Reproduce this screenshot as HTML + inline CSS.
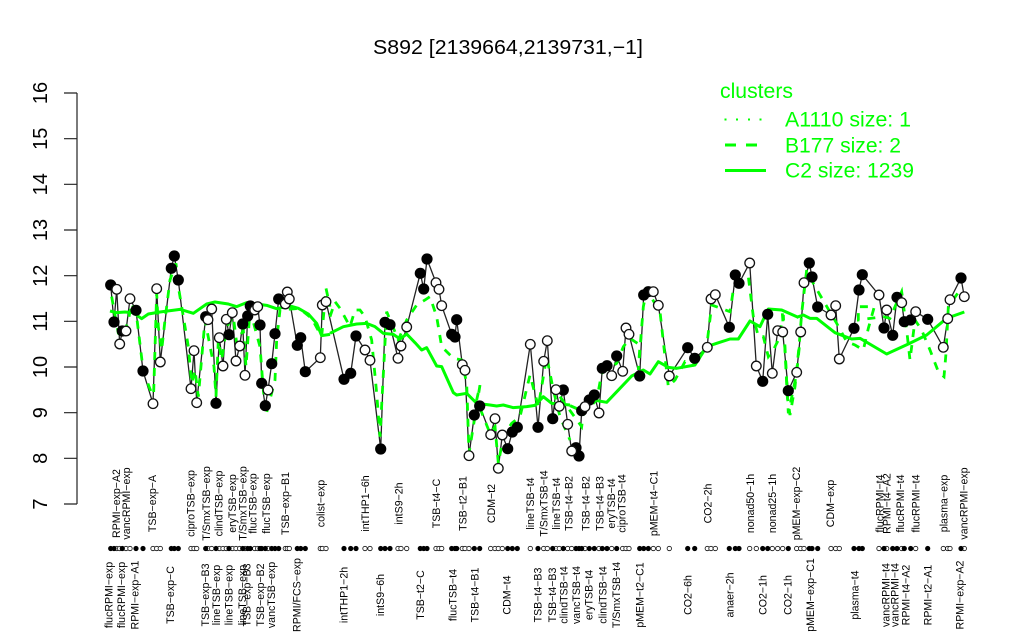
<!DOCTYPE html>
<html><head><meta charset="utf-8"><title>S892</title>
<style>
html,body{margin:0;padding:0;background:#fff}
svg{display:block;font-family:"Liberation Sans",sans-serif;filter:blur(.3px)}
.s{fill:none;stroke:#0f0;stroke-width:3;stroke-linejoin:round;vector-effect:non-scaling-stroke}
.d{fill:none;stroke:#0f0;stroke-width:2.8;stroke-dasharray:8 8;vector-effect:non-scaling-stroke}
.l text{font-size:10.6px;text-anchor:middle}
.lg text{fill:#0f0}
</style></head><body>
<svg width="1024" height="640" viewBox="0 0 1024 640" xmlns="http://www.w3.org/2000/svg">
<rect width="1024" height="640" fill="#fff"/>
<text x="508" y="54" font-size="20" text-anchor="middle" textLength="270" lengthAdjust="spacingAndGlyphs">S892 [2139664,2139731,−1]</text>

<g stroke="#222" stroke-width="1.2" fill="none">
<path d="M77 93V504M64 93H77M64 138.7H77M64 184.3H77M64 230H77M64 275.7H77M64 321.3H77M64 367H77M64 412.7H77M64 458.3H77M64 504H77"/>
</g>
<g font-size="20" text-anchor="middle">
<text transform="translate(47 93) rotate(-90)">16</text>
<text transform="translate(47 138.7) rotate(-90)">15</text>
<text transform="translate(47 184.3) rotate(-90)">14</text>
<text transform="translate(47 230) rotate(-90)">13</text>
<text transform="translate(47 275.7) rotate(-90)">12</text>
<text transform="translate(47 321.3) rotate(-90)">11</text>
<text transform="translate(47 367) rotate(-90)">10</text>
<text transform="translate(47 412.7) rotate(-90)">9</text>
<text transform="translate(47 458.3) rotate(-90)">8</text>
<text transform="translate(47 504) rotate(-90)">7</text>
</g>

<!-- black connecting line -->
<polyline fill="none" stroke="#222" stroke-width="1.3" points="110.7,285 114,322 116.7,289.3 119.7,344 122.3,331 126,331 130,298.7 136,310.3 143,371 153,403.7 156.7,288.7 160.3,362 171.3,268.3 174.3,256 178.3,280 191,388.7 194,350.7 196.7,402.7 205.7,316.7 208,319.7 211.7,309 216,403.3 219.3,337.7 223,366 226.3,319.3 229,334.7 232.3,312.7 236,361 239.7,346 242.7,324 245,375.3 247.7,316 250.3,306 254.7,310 257.7,306.7 260,325 261.7,383.3 265.3,405.7 268,390 271.7,363.7 275,333.7 278.7,299 285.3,304 287.3,292 289.3,299 297.3,345.3 300.7,337.7 305.3,371.7 320.3,357.7 322.3,305 326,301.7 344,379.3 350.7,373.3 356,336 365,350 370,360.3 380.7,449 385,322.3 390,324.7 398,358.3 401,346 406.7,327 420.3,273.3 423.7,289 427,259 436,282.7 439,289.3 441.7,305.7 451.7,334.3 455,337 456.7,319.7 462.3,364.7 465,370.3 469,455.7 474.3,415 479.7,406 490.7,434.7 495,418.7 498.3,468.3 502.3,435 507.7,448.7 512.3,432 517.3,427.3 530.3,344.3 538,427.3 543.7,361.3 547.3,340.7 552.7,418.7 556,389.7 559.3,406.3 563.3,390 567.7,424.3 571.7,451 576,447.7 579,456 581.7,410.7 585,406.7 589.3,400 594.3,395 599,413 602.3,368.3 607,365.7 611.7,375.7 616.7,356 622.7,371.3 626,328 629,334.3 639.7,376 643.7,295 648.3,291.7 653.3,291.7 658.3,305.3 669.3,376 687.7,347.7 694.7,358.3 707.3,347.3 711,299 715.3,294.7 729.3,327.3 735.3,275 739,283.3 749.7,263 756.3,366 762.7,381.3 767.7,314.3 772.3,373.3 777.7,330.7 782.7,332 788.3,390.7 796.7,372.3 800.7,332 804,282.7 809.3,263 812,277 817.7,307 831,315 835.7,305.7 839.3,359 854,328.3 859,290 862.3,274.7 879,295 884,328 886.7,310 892.7,335.3 897,297.3 901.7,302.7 904.3,321.7 910.7,320 915.7,311.7 927.7,319.3 943.3,347.3 947.7,318.7 950,299.7 961,278 964.3,296.7"/>

<!-- dashed cluster -->
<g transform="translate(90 240) scale(.33333)"><polyline class="d" points="65,170 72,210 85,280 100,290 115,240 125,190 140,230 160,395 185,460 190,490 200,160 205,260 215,330 225,240 240,120 258,70 265,140 295,320 305,430 315,390 325,470 345,240 372,380 378,470 385,300 395,360 410,260 430,230 440,310 460,270 468,380 480,210 510,320 520,450 528,525 555,420 560,300 570,210 628,205 665,235 695,290 708,145 720,200"/></g>
<g transform="translate(330 240) scale(.33333)"><polyline class="d" points="0,230 15,185 30,205 60,260 75,210 90,210 105,230 125,300 140,460 150,590 170,215 205,300 230,240 260,195 285,180 300,170 320,230 335,320 370,355 395,360 410,430 417,640 450,435 440,480 480,580 495,560 505,670 520,590 545,550 570,530 600,405 625,500 640,410 650,350 670,450 690,530 720,600"/></g>
<g transform="translate(560 240) scale(.33333)"><polyline class="d" points="0,470 65,560 70,520 110,480 125,400 170,370 190,320 210,295 240,315 235,390 250,200 260,150 300,215 325,440 345,420 375,365 400,375 440,320 455,195 510,215 520,150 565,110 580,230 595,290 610,290 625,350 640,330 655,300 670,225 685,520 710,400 718,320"/></g>
<g transform="translate(780 240) scale(.33333)"><polyline class="d" points="7,220 15,330 22,470 30,525 45,440 58,310 65,220 80,90 100,130 120,165 170,250 200,305 225,315 250,330 265,265 283,200 235,200 235,240 310,230 330,235 345,200 365,155 380,270 390,360 405,240 425,270 450,330 475,395 492,410 498,340 505,200 540,150"/></g>

<!-- solid cluster -->
<g transform="translate(90 240) scale(.33333)"><polyline class="s" points="60,213 80,218 105,216 130,218 155,236 175,222 210,216 270,208 310,220 350,192 375,186 415,192 440,200 470,188 500,192 530,196 560,206 600,198 625,205 655,222 680,250 695,287 720,283"/></g>
<g transform="translate(330 240) scale(.33333)"><polyline class="s" points="0,280 40,260 80,252 110,250 135,260 160,280 190,283 210,297 230,282 255,308 275,330 290,323 320,378 335,380 370,458 380,465 410,460 440,490 480,495 500,498 520,495 550,503 590,500 615,496 640,470 665,490 720,495"/></g>
<g transform="translate(560 240) scale(.33333)"><polyline class="s" points="30,497 60,510 100,480 140,487 180,445 215,408 250,390 270,402 295,365 325,382 350,385 405,375 440,320 470,310 510,297 535,297 570,243 600,260 625,207 665,210 715,232"/></g>
<g transform="translate(780 240) scale(.33333)"><polyline class="s" points="50,232 70,225 90,235 110,235 165,278 215,297 240,295 320,342 350,328 385,312 440,285 500,235 553,216"/></g>

<!-- points -->
<g fill="#000">
<circle r="5.6" cx="110.7" cy="285"/><circle r="5.6" cx="114" cy="322"/><circle r="5.6" cx="122.3" cy="331"/><circle r="5.6" cx="136" cy="310.3"/><circle r="5.6" cx="143" cy="371"/><circle r="5.6" cx="171.3" cy="268.3"/><circle r="5.6" cx="174.3" cy="256"/><circle r="5.6" cx="178.3" cy="280"/><circle r="5.6" cx="205.7" cy="316.7"/><circle r="5.6" cx="216" cy="403.3"/><circle r="5.6" cx="229" cy="334.7"/><circle r="5.6" cx="242.7" cy="324"/><circle r="5.6" cx="247.7" cy="316"/><circle r="5.6" cx="250.3" cy="306"/><circle r="5.6" cx="260" cy="325"/><circle r="5.6" cx="261.7" cy="383.3"/><circle r="5.6" cx="265.3" cy="405.7"/><circle r="5.6" cx="271.7" cy="363.7"/><circle r="5.6" cx="275" cy="333.7"/><circle r="5.6" cx="278.7" cy="299"/><circle r="5.6" cx="297.3" cy="345.3"/><circle r="5.6" cx="300.7" cy="337.7"/><circle r="5.6" cx="305.3" cy="371.7"/><circle r="5.6" cx="344" cy="379.3"/><circle r="5.6" cx="350.7" cy="373.3"/><circle r="5.6" cx="356" cy="336"/><circle r="5.6" cx="380.7" cy="449"/><circle r="5.6" cx="385" cy="322.3"/><circle r="5.6" cx="390" cy="324.7"/><circle r="5.6" cx="420.3" cy="273.3"/><circle r="5.6" cx="423.7" cy="289"/><circle r="5.6" cx="427" cy="259"/><circle r="5.6" cx="451.7" cy="334.3"/><circle r="5.6" cx="455" cy="337"/><circle r="5.6" cx="456.7" cy="319.7"/><circle r="5.6" cx="474.3" cy="415"/><circle r="5.6" cx="479.7" cy="406"/><circle r="5.6" cx="507.7" cy="448.7"/><circle r="5.6" cx="512.3" cy="432"/><circle r="5.6" cx="517.3" cy="427.3"/><circle r="5.6" cx="538" cy="427.3"/><circle r="5.6" cx="552.7" cy="418.7"/><circle r="5.6" cx="563.3" cy="390"/><circle r="5.6" cx="576" cy="447.7"/><circle r="5.6" cx="579" cy="456"/><circle r="5.6" cx="581.7" cy="410.7"/><circle r="5.6" cx="589.3" cy="400"/><circle r="5.6" cx="594.3" cy="395"/><circle r="5.6" cx="602.3" cy="368.3"/><circle r="5.6" cx="607" cy="365.7"/><circle r="5.6" cx="616.7" cy="356"/><circle r="5.6" cx="639.7" cy="376"/><circle r="5.6" cx="643.7" cy="295"/><circle r="5.6" cx="648.3" cy="291.7"/><circle r="5.6" cx="687.7" cy="347.7"/><circle r="5.6" cx="694.7" cy="358.3"/><circle r="5.6" cx="729.3" cy="327.3"/><circle r="5.6" cx="735.3" cy="275"/><circle r="5.6" cx="739" cy="283.3"/><circle r="5.6" cx="762.7" cy="381.3"/><circle r="5.6" cx="767.7" cy="314.3"/><circle r="5.6" cx="788.3" cy="390.7"/><circle r="5.6" cx="809.3" cy="263"/><circle r="5.6" cx="812" cy="277"/><circle r="5.6" cx="817.7" cy="307"/><circle r="5.6" cx="854" cy="328.3"/><circle r="5.6" cx="859" cy="290"/><circle r="5.6" cx="862.3" cy="274.7"/><circle r="5.6" cx="884" cy="328"/><circle r="5.6" cx="892.7" cy="335.3"/><circle r="5.6" cx="897" cy="297.3"/><circle r="5.6" cx="904.3" cy="321.7"/><circle r="5.6" cx="910.7" cy="320"/><circle r="5.6" cx="927.7" cy="319.3"/><circle r="5.6" cx="961" cy="278"/>
</g>
<g fill="#fff" stroke="#111" stroke-width="1.3">
<circle r="4.8" cx="116.7" cy="289.3"/><circle r="4.8" cx="119.7" cy="344"/><circle r="4.8" cx="126" cy="331"/><circle r="4.8" cx="130" cy="298.7"/><circle r="4.8" cx="153" cy="403.7"/><circle r="4.8" cx="156.7" cy="288.7"/><circle r="4.8" cx="160.3" cy="362"/><circle r="4.8" cx="191" cy="388.7"/><circle r="4.8" cx="194" cy="350.7"/><circle r="4.8" cx="196.7" cy="402.7"/><circle r="4.8" cx="208" cy="319.7"/><circle r="4.8" cx="211.7" cy="309"/><circle r="4.8" cx="219.3" cy="337.7"/><circle r="4.8" cx="223" cy="366"/><circle r="4.8" cx="226.3" cy="319.3"/><circle r="4.8" cx="232.3" cy="312.7"/><circle r="4.8" cx="236" cy="361"/><circle r="4.8" cx="239.7" cy="346"/><circle r="4.8" cx="245" cy="375.3"/><circle r="4.8" cx="254.7" cy="310"/><circle r="4.8" cx="257.7" cy="306.7"/><circle r="4.8" cx="268" cy="390"/><circle r="4.8" cx="285.3" cy="304"/><circle r="4.8" cx="287.3" cy="292"/><circle r="4.8" cx="289.3" cy="299"/><circle r="4.8" cx="320.3" cy="357.7"/><circle r="4.8" cx="322.3" cy="305"/><circle r="4.8" cx="326" cy="301.7"/><circle r="4.8" cx="365" cy="350"/><circle r="4.8" cx="370" cy="360.3"/><circle r="4.8" cx="398" cy="358.3"/><circle r="4.8" cx="401" cy="346"/><circle r="4.8" cx="406.7" cy="327"/><circle r="4.8" cx="436" cy="282.7"/><circle r="4.8" cx="439" cy="289.3"/><circle r="4.8" cx="441.7" cy="305.7"/><circle r="4.8" cx="462.3" cy="364.7"/><circle r="4.8" cx="465" cy="370.3"/><circle r="4.8" cx="469" cy="455.7"/><circle r="4.8" cx="490.7" cy="434.7"/><circle r="4.8" cx="495" cy="418.7"/><circle r="4.8" cx="498.3" cy="468.3"/><circle r="4.8" cx="502.3" cy="435"/><circle r="4.8" cx="530.3" cy="344.3"/><circle r="4.8" cx="543.7" cy="361.3"/><circle r="4.8" cx="547.3" cy="340.7"/><circle r="4.8" cx="556" cy="389.7"/><circle r="4.8" cx="559.3" cy="406.3"/><circle r="4.8" cx="567.7" cy="424.3"/><circle r="4.8" cx="571.7" cy="451"/><circle r="4.8" cx="585" cy="406.7"/><circle r="4.8" cx="599" cy="413"/><circle r="4.8" cx="611.7" cy="375.7"/><circle r="4.8" cx="622.7" cy="371.3"/><circle r="4.8" cx="626" cy="328"/><circle r="4.8" cx="629" cy="334.3"/><circle r="4.8" cx="653.3" cy="291.7"/><circle r="4.8" cx="658.3" cy="305.3"/><circle r="4.8" cx="669.3" cy="376"/><circle r="4.8" cx="707.3" cy="347.3"/><circle r="4.8" cx="711" cy="299"/><circle r="4.8" cx="715.3" cy="294.7"/><circle r="4.8" cx="749.7" cy="263"/><circle r="4.8" cx="756.3" cy="366"/><circle r="4.8" cx="772.3" cy="373.3"/><circle r="4.8" cx="777.7" cy="330.7"/><circle r="4.8" cx="782.7" cy="332"/><circle r="4.8" cx="796.7" cy="372.3"/><circle r="4.8" cx="800.7" cy="332"/><circle r="4.8" cx="804" cy="282.7"/><circle r="4.8" cx="831" cy="315"/><circle r="4.8" cx="835.7" cy="305.7"/><circle r="4.8" cx="839.3" cy="359"/><circle r="4.8" cx="879" cy="295"/><circle r="4.8" cx="886.7" cy="310"/><circle r="4.8" cx="901.7" cy="302.7"/><circle r="4.8" cx="915.7" cy="311.7"/><circle r="4.8" cx="943.3" cy="347.3"/><circle r="4.8" cx="947.7" cy="318.7"/><circle r="4.8" cx="950" cy="299.7"/><circle r="4.8" cx="964.3" cy="296.7"/>
</g>

<!-- rug: open -->
<g fill="#fff" stroke="#111" stroke-width=".8" transform="translate(0 548.5)">
<circle r="2.2" cx="116.7"/><circle r="2.2" cx="119.7"/><circle r="2.2" cx="126"/><circle r="2.2" cx="130"/><circle r="2.2" cx="153"/><circle r="2.2" cx="156.7"/><circle r="2.2" cx="160.3"/><circle r="2.2" cx="191"/><circle r="2.2" cx="194"/><circle r="2.2" cx="196.7"/><circle r="2.2" cx="208"/><circle r="2.2" cx="211.7"/><circle r="2.2" cx="219.3"/><circle r="2.2" cx="223"/><circle r="2.2" cx="226.3"/><circle r="2.2" cx="232.3"/><circle r="2.2" cx="236"/><circle r="2.2" cx="239.7"/><circle r="2.2" cx="245"/><circle r="2.2" cx="254.7"/><circle r="2.2" cx="257.7"/><circle r="2.2" cx="268"/><circle r="2.2" cx="285.3"/><circle r="2.2" cx="287.3"/><circle r="2.2" cx="289.3"/><circle r="2.2" cx="320.3"/><circle r="2.2" cx="322.3"/><circle r="2.2" cx="326"/><circle r="2.2" cx="365"/><circle r="2.2" cx="370"/><circle r="2.2" cx="398"/><circle r="2.2" cx="401"/><circle r="2.2" cx="406.7"/><circle r="2.2" cx="436"/><circle r="2.2" cx="439"/><circle r="2.2" cx="441.7"/><circle r="2.2" cx="462.3"/><circle r="2.2" cx="465"/><circle r="2.2" cx="469"/><circle r="2.2" cx="490.7"/><circle r="2.2" cx="495"/><circle r="2.2" cx="498.3"/><circle r="2.2" cx="502.3"/><circle r="2.2" cx="530.3"/><circle r="2.2" cx="543.7"/><circle r="2.2" cx="547.3"/><circle r="2.2" cx="556"/><circle r="2.2" cx="559.3"/><circle r="2.2" cx="567.7"/><circle r="2.2" cx="571.7"/><circle r="2.2" cx="585"/><circle r="2.2" cx="599"/><circle r="2.2" cx="611.7"/><circle r="2.2" cx="622.7"/><circle r="2.2" cx="626"/><circle r="2.2" cx="629"/><circle r="2.2" cx="653.3"/><circle r="2.2" cx="658.3"/><circle r="2.2" cx="669.3"/><circle r="2.2" cx="707.3"/><circle r="2.2" cx="711"/><circle r="2.2" cx="715.3"/><circle r="2.2" cx="749.7"/><circle r="2.2" cx="756.3"/><circle r="2.2" cx="772.3"/><circle r="2.2" cx="777.7"/><circle r="2.2" cx="782.7"/><circle r="2.2" cx="796.7"/><circle r="2.2" cx="800.7"/><circle r="2.2" cx="804"/><circle r="2.2" cx="831"/><circle r="2.2" cx="835.7"/><circle r="2.2" cx="839.3"/><circle r="2.2" cx="879"/><circle r="2.2" cx="886.7"/><circle r="2.2" cx="901.7"/><circle r="2.2" cx="915.7"/><circle r="2.2" cx="943.3"/><circle r="2.2" cx="947.7"/><circle r="2.2" cx="950"/><circle r="2.2" cx="964.3"/>
</g>
<!-- rug: filled -->
<g fill="#000" transform="translate(0 548.5)">
<circle r="2.6" cx="110.7"/><circle r="2.6" cx="114"/><circle r="2.6" cx="122.3"/><circle r="2.6" cx="136"/><circle r="2.6" cx="143"/><circle r="2.6" cx="171.3"/><circle r="2.6" cx="174.3"/><circle r="2.6" cx="178.3"/><circle r="2.6" cx="205.7"/><circle r="2.6" cx="216"/><circle r="2.6" cx="229"/><circle r="2.6" cx="242.7"/><circle r="2.6" cx="247.7"/><circle r="2.6" cx="250.3"/><circle r="2.6" cx="260"/><circle r="2.6" cx="261.7"/><circle r="2.6" cx="265.3"/><circle r="2.6" cx="271.7"/><circle r="2.6" cx="275"/><circle r="2.6" cx="278.7"/><circle r="2.6" cx="297.3"/><circle r="2.6" cx="300.7"/><circle r="2.6" cx="305.3"/><circle r="2.6" cx="344"/><circle r="2.6" cx="350.7"/><circle r="2.6" cx="356"/><circle r="2.6" cx="380.7"/><circle r="2.6" cx="385"/><circle r="2.6" cx="390"/><circle r="2.6" cx="420.3"/><circle r="2.6" cx="423.7"/><circle r="2.6" cx="427"/><circle r="2.6" cx="451.7"/><circle r="2.6" cx="455"/><circle r="2.6" cx="456.7"/><circle r="2.6" cx="474.3"/><circle r="2.6" cx="479.7"/><circle r="2.6" cx="507.7"/><circle r="2.6" cx="512.3"/><circle r="2.6" cx="517.3"/><circle r="2.6" cx="538"/><circle r="2.6" cx="552.7"/><circle r="2.6" cx="563.3"/><circle r="2.6" cx="576"/><circle r="2.6" cx="579"/><circle r="2.6" cx="581.7"/><circle r="2.6" cx="589.3"/><circle r="2.6" cx="594.3"/><circle r="2.6" cx="602.3"/><circle r="2.6" cx="607"/><circle r="2.6" cx="616.7"/><circle r="2.6" cx="639.7"/><circle r="2.6" cx="643.7"/><circle r="2.6" cx="648.3"/><circle r="2.6" cx="687.7"/><circle r="2.6" cx="694.7"/><circle r="2.6" cx="729.3"/><circle r="2.6" cx="735.3"/><circle r="2.6" cx="739"/><circle r="2.6" cx="762.7"/><circle r="2.6" cx="767.7"/><circle r="2.6" cx="788.3"/><circle r="2.6" cx="809.3"/><circle r="2.6" cx="812"/><circle r="2.6" cx="817.7"/><circle r="2.6" cx="854"/><circle r="2.6" cx="859"/><circle r="2.6" cx="862.3"/><circle r="2.6" cx="884"/><circle r="2.6" cx="892.7"/><circle r="2.6" cx="897"/><circle r="2.6" cx="904.3"/><circle r="2.6" cx="910.7"/><circle r="2.6" cx="927.7"/><circle r="2.6" cx="961"/>
</g>

<!-- upper labels -->
<g class="l">
<text transform="translate(120 503.5) rotate(-90)">RPMI−exp−A2</text>
<text transform="translate(130 503.5) rotate(-90)">vancRPMI−exp</text>
<text transform="translate(156 503.5) rotate(-90)">TSB−exp−A</text>
<text transform="translate(194.3 503.5) rotate(-90)">ciproTSB−exp</text>
<text transform="translate(210 503.5) rotate(-90)">T/SmxTSB−exp</text>
<text transform="translate(222.7 503.5) rotate(-90)">clindTSB−exp</text>
<text transform="translate(236 503.5) rotate(-90)">eryTSB−exp</text>
<text transform="translate(246.7 503.5) rotate(-90)">T/SmxTSB−exp</text>
<text transform="translate(256.7 503.5) rotate(-90)">flucTSB−exp</text>
<text transform="translate(270 503.5) rotate(-90)">flucTSB−exp</text>
<text transform="translate(289 503.5) rotate(-90)">TSB−exp−B1</text>
<text transform="translate(324.3 503.5) rotate(-90)">colist−exp</text>
<text transform="translate(369 503.5) rotate(-90)">intTHP1−6h</text>
<text transform="translate(402.3 503.5) rotate(-90)">intS9−2h</text>
<text transform="translate(440 503.5) rotate(-90)">TSB−t4−C</text>
<text transform="translate(466.7 503.5) rotate(-90)">TSB−t2−B1</text>
<text transform="translate(495 503.5) rotate(-90)">CDM−t2</text>
<text transform="translate(534 503.5) rotate(-90)">lineTSB−t4</text>
<text transform="translate(547.7 503.5) rotate(-90)">T/SmxTSB−t4</text>
<text transform="translate(560 503.5) rotate(-90)">lineTSB−t4</text>
<text transform="translate(572.7 503.5) rotate(-90)">TSB−t4−B2</text>
<text transform="translate(589.3 503.5) rotate(-90)">TSB−t4−B2</text>
<text transform="translate(603.3 503.5) rotate(-90)">TSB−t4−B3</text>
<text transform="translate(615 503.5) rotate(-90)">eryTSB−t4</text>
<text transform="translate(625.7 503.5) rotate(-90)">ciproTSB−t4</text>
<text transform="translate(657.3 503.5) rotate(-90)">pMEM−t4−C1</text>
<text transform="translate(711.7 503.5) rotate(-90)">CO2−2h</text>
<text transform="translate(754 503.5) rotate(-90)">nonad50−1h</text>
<text transform="translate(776 503.5) rotate(-90)">nonad25−1h</text>
<text transform="translate(800 503.5) rotate(-90)">pMEM−exp−C2</text>
<text transform="translate(834 503.5) rotate(-90)">CDM−exp</text>
<text transform="translate(883.3 503.5) rotate(-90)">flucRPMI−t4</text>
<text transform="translate(890.7 503.5) rotate(-90)">RPMI−t4−A2</text>
<text transform="translate(904 503.5) rotate(-90)">flucRPMI−t4</text>
<text transform="translate(919.3 503.5) rotate(-90)">flucRPMI−t4</text>
<text transform="translate(947.7 503.5) rotate(-90)">plasma−exp</text>
<text transform="translate(967.3 503.5) rotate(-90)">vancRPMI−exp</text>
</g>
<!-- lower labels -->
<g class="l">
<text transform="translate(112.7 595) rotate(-90)">flucRPMI−exp</text>
<text transform="translate(125 595) rotate(-90)">flucRPMI−exp</text>
<text transform="translate(138.3 595) rotate(-90)">RPMI−exp−A1</text>
<text transform="translate(174 595) rotate(-90)">TSB−exp−C</text>
<text transform="translate(209 595) rotate(-90)">TSB−exp−B3</text>
<text transform="translate(220 595) rotate(-90)">lineTSB−exp</text>
<text transform="translate(232.7 595) rotate(-90)">lineTSB−exp</text>
<text transform="translate(246 595) rotate(-90)">lineTSB−exp</text>
<text transform="translate(250.7 595) rotate(-90)">TSB−exp−B3</text>
<text transform="translate(264 595) rotate(-90)">TSB−exp−B2</text>
<text transform="translate(275 595) rotate(-90)">vancTSB−exp</text>
<text transform="translate(300.7 595) rotate(-90)">RPMI/FCS−exp</text>
<text transform="translate(347.3 595) rotate(-90)">intTHP1−2h</text>
<text transform="translate(384 595) rotate(-90)">intS9−6h</text>
<text transform="translate(424 595) rotate(-90)">TSB−t2−C</text>
<text transform="translate(456.7 595) rotate(-90)">flucTSB−t4</text>
<text transform="translate(478.3 595) rotate(-90)">TSB−t4−B1</text>
<text transform="translate(510.7 595) rotate(-90)">CDM−t4</text>
<text transform="translate(541.7 595) rotate(-90)">TSB−t4−B3</text>
<text transform="translate(556 595) rotate(-90)">TSB−t4−B3</text>
<text transform="translate(567.3 595) rotate(-90)">clindTSB−t4</text>
<text transform="translate(580 595) rotate(-90)">vancTSB−t4</text>
<text transform="translate(592.7 595) rotate(-90)">eryTSB−t4</text>
<text transform="translate(606.7 595) rotate(-90)">clindTSB−t4</text>
<text transform="translate(620 595) rotate(-90)">T/SmxTSB−t4</text>
<text transform="translate(643.3 595) rotate(-90)">pMEM−t2−C1</text>
<text transform="translate(691.7 595) rotate(-90)">CO2−6h</text>
<text transform="translate(733.3 595) rotate(-90)">anaer−2h</text>
<text transform="translate(766.7 595) rotate(-90)">CO2−1h</text>
<text transform="translate(791.7 595) rotate(-90)">CO2−1h</text>
<text transform="translate(814 595) rotate(-90)">pMEM−exp−C1</text>
<text transform="translate(858.3 595) rotate(-90)">plasma−t4</text>
<text transform="translate(889.3 595) rotate(-90)">vancRPMI−t4</text>
<text transform="translate(898.3 595) rotate(-90)">vancRPMI−t4</text>
<text transform="translate(909.3 595) rotate(-90)">RPMI−t4−A2</text>
<text transform="translate(931.7 595) rotate(-90)">RPMI−t2−A1</text>
<text transform="translate(963.3 595) rotate(-90)">RPMI−exp−A2</text>
</g>

<!-- legend -->
<g class="lg" font-size="21">
<text x="720" y="98" textLength="73" lengthAdjust="spacingAndGlyphs">clusters</text>
<text x="785" y="126.7" textLength="126" lengthAdjust="spacingAndGlyphs">A1110 size: 1</text>
<text x="785" y="152.7" textLength="116" lengthAdjust="spacingAndGlyphs">B177 size: 2</text>
<text x="785" y="177.3" textLength="129" lengthAdjust="spacingAndGlyphs">C2 size: 1239</text>
</g>
<g fill="#0f0"><rect x="724.5" y="118.5" width="2" height="2"/><rect x="736" y="118.5" width="2" height="2"/><rect x="748" y="118.5" width="2" height="2"/><rect x="759.5" y="118.5" width="2" height="2"/>
<rect x="725" y="143.5" width="11" height="3"/><rect x="746" y="143.5" width="11" height="3"/>
<rect x="725" y="169" width="41" height="3"/></g>
</svg>
</body></html>
